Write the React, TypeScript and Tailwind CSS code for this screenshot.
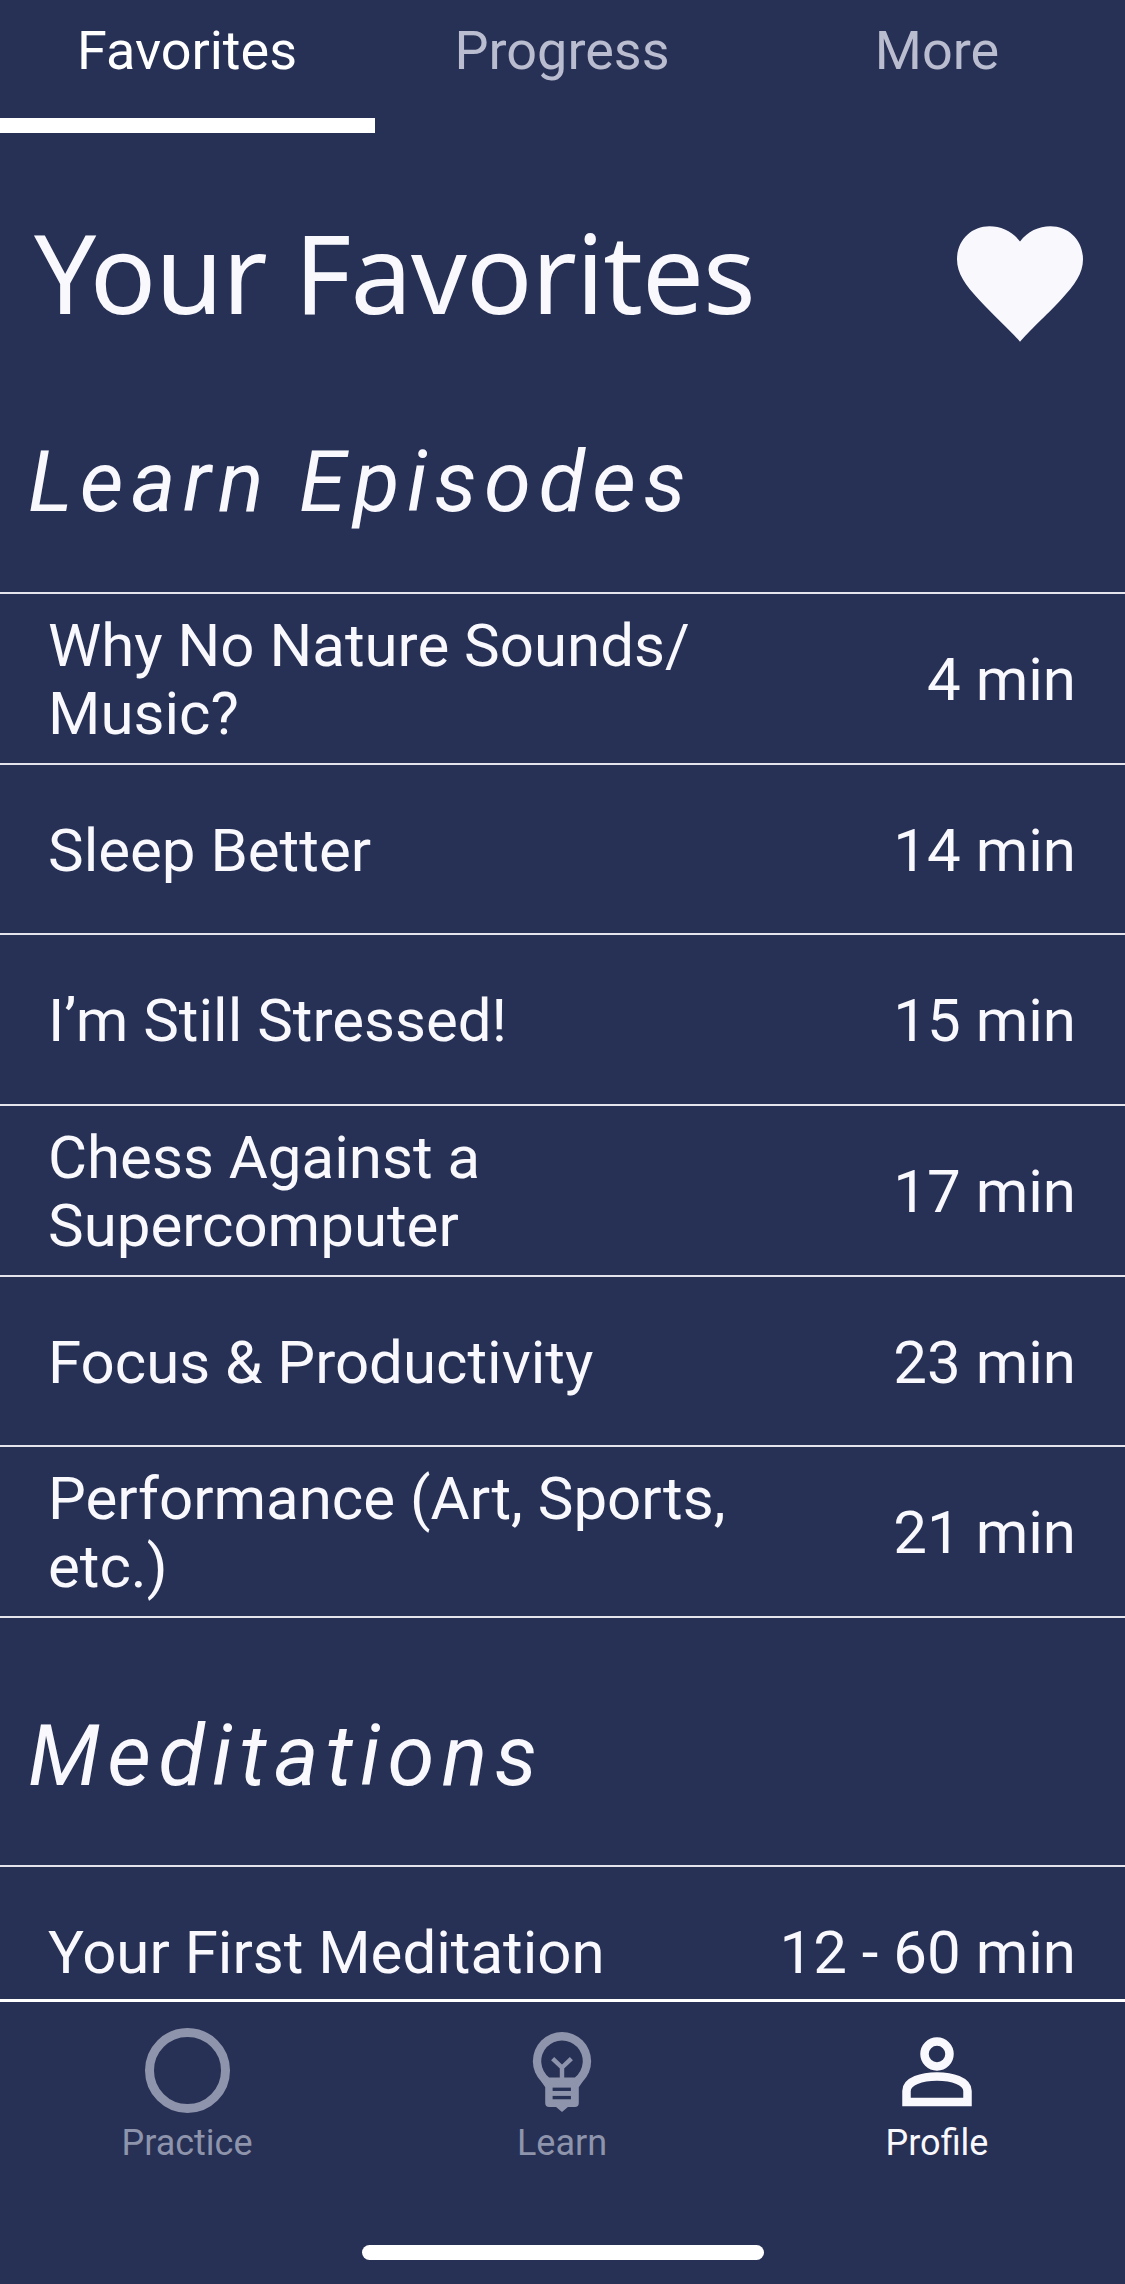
const episodes: [string[], string][] = [
  [["Why No Nature Sounds/", "Music?"], "4 min"],
  [["Sleep Better"], "14 min"],
  [["I’m Still Stressed!"], "15 min"],
  [["Chess Against a", "Supercomputer"], "17 min"],
  [["Focus & Productivity"], "23 min"],
  [["Performance (Art, Sports,", "etc.)"], "21 min"],
];

function Row({ lines, time }: { lines: string[]; time: string }) {
  return (
    <div className="flex h-[170.7px] items-center justify-between border-b-2 border-[#e4e5ec] pt-[3px] pl-[48px] pr-[49px]">
      <div className="text-[60px] leading-[68px]">
        {lines.map((l) => (
          <div key={l}>{l}</div>
        ))}
      </div>
      <div className="text-[60px] leading-[68px]">{time}</div>
    </div>
  );
}

function Heading({ children }: { children: string }) {
  return <div className="pl-[28px] text-[85px] leading-[94px] italic tracking-[7.3px]">{children}</div>;
}

export default function App() {
  return (
    <div className="flex h-[2284px] w-[1125px] flex-col overflow-hidden bg-[#273055] font-['Roboto',sans-serif] text-[#f8f8fd]">
      <div className="min-h-0 flex-1 overflow-hidden">
        <div className="grid h-[133px] grid-cols-3 text-center text-[54px]">
          <div className="border-b-[15px] border-white pt-[21px] pr-[1px] leading-[59px] text-white">Favorites</div>
          <div className="pt-[21px] pr-[1px] leading-[59px] text-[#b9bdcf]">Progress</div>
          <div className="pt-[21px] pr-[1px] leading-[59px] text-[#b9bdcf]">More</div>
        </div>
        <div className="flex h-[203px] items-end justify-between pr-[42px] pl-[34px]">
          <div className="font-['Noto_Sans',sans-serif] text-[110px] leading-[130px] tracking-[-1px]">Your Favorites</div>
          <svg viewBox="0 0 24 22" className="mb-[-6px] h-[116px] w-[126px] fill-[#f8f8fd]">
            <path d="M12 22 C10.5 20.2 7 17 4.2 14 C1.6 11.2 0 9 0 6.3 C0 2.7 2.7 0 6.2 0 C8.4 0 10.6 1 12 2.9 C13.4 1 15.6 0 17.8 0 C21.3 0 24 2.7 24 6.3 C24 9 22.4 11.2 19.8 14 C17 17 13.5 20.2 12 22 Z" />
          </svg>
        </div>
        <div className="pt-[99px] pb-[63px]">
          <Heading>Learn Episodes</Heading>
        </div>
        <div className="border-t-2 border-[#e4e5ec]">
          {episodes.map(([lines, time]) => (
            <Row key={lines[0]} lines={lines} time={time} />
          ))}
        </div>
        <div className="pt-[91px] pb-[62px]">
          <Heading>Meditations</Heading>
        </div>
        <div className="border-t-2 border-[#e4e5ec]">
          <Row lines={["Your First Meditation"]} time="12 - 60 min" />
        </div>
      </div>
      <div className="relative h-[285px] shrink-0 border-t-[3px] border-white bg-[#273055]">
        <div className="grid grid-cols-3 pt-[26px] text-center text-[36px] leading-[40px]">
          <div className="flex flex-col items-center pr-[1px] text-[#8e94ab]">
            <div className="h-[85px] w-[85px] rounded-full border-[9px] border-[#8e94ab]" />
            <div className="mt-[10px]">Practice</div>
          </div>
          <div className="flex flex-col items-center pr-[1px] text-[#8e94ab]">
            <svg viewBox="0 0 60 82" className="mt-[4px] h-[81px] w-[60px]">
              <circle cx="30" cy="29.5" r="29.5" fill="#8e94ab" />
              <path d="M9 50 L13 56 V72 Q13 76 17 76 H24 L30 81 L36 76 H43 Q47 76 47 72 V56 L51 50 Z" fill="#8e94ab" />
              <path d="M17 46 A21 21 0 1 1 43 46 Z" fill="#273055" />
              <path d="M30 47 V36 M20.5 27 L30 36 L39.5 27" fill="none" stroke="#8e94ab" strokeWidth="4.5" />
              <rect x="20.5" y="56.3" width="18.5" height="3.4" fill="#273055" />
              <rect x="20.5" y="64.7" width="18.5" height="3.4" fill="#273055" />
            </svg>
            <div className="mt-[10px]">Learn</div>
          </div>
          <div className="flex flex-col items-center pr-[1px] text-[#f8f8fd]">
            <svg viewBox="0 0 70 70" className="mt-[9px] h-[70px] w-[70px]" fill="none" stroke="#f8f8fd" strokeWidth="8.5">
              <circle cx="35" cy="17" r="12.5" />
              <path d="M4.5 65 V54 C4.5 44 20 39.5 35 39.5 C50 39.5 65.5 44 65.5 54 V65 Z" />
            </svg>
            <div className="mt-[16px]">Profile</div>
          </div>
        </div>
        <div className="absolute bottom-[24px] left-[362px] h-[15px] w-[402px] rounded-[8px] bg-white" />
      </div>
    </div>
  );
}
